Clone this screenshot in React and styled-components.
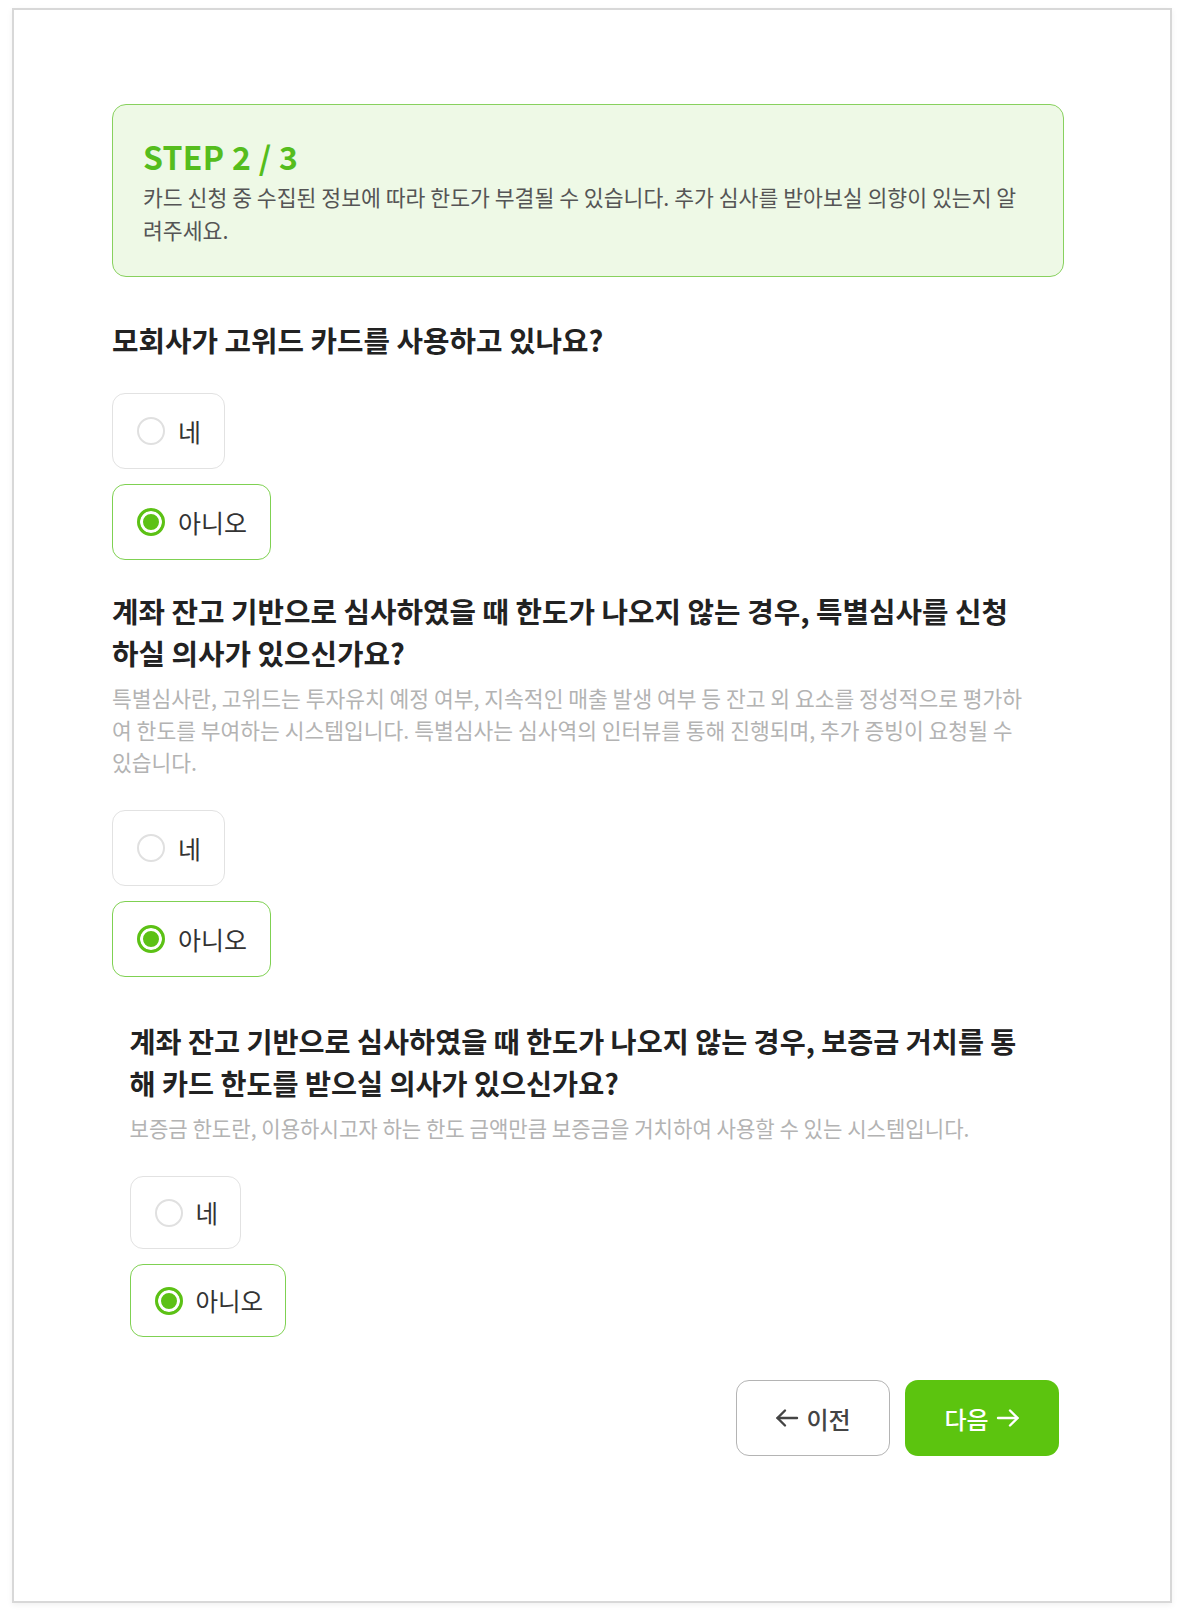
import styled, { createGlobalStyle, css } from 'styled-components';

const GlobalStyle = createGlobalStyle`
  body {
    margin: 0;
    background: #ffffff;
    font-family: "Noto Sans CJK KR", "Noto Sans", sans-serif;
    color: #222222;
  }
`;

const Frame = styled.div`
  margin: 8px 12px 16px;
  border: 2px solid #d8d8d8;
  box-shadow: 0 2px 6px rgba(0, 0, 0, 0.06);
  padding: 94px 0 145px 98px;
`;

const Content = styled.div`
  width: 952px;
  display: flex;
  flex-direction: column;
`;

const InfoBox = styled.div`
  background: #eef9e6;
  border: 1.5px solid #88d15e;
  border-radius: 14px;
  padding: 32px 38px 30px 30px;
`;

const StepTitle = styled.h2`
  margin: 0;
  font-size: 32px;
  line-height: 39px;
  font-weight: 700;
  color: #55bd1d;
  letter-spacing: 0.3px;
`;

const InfoText = styled.p`
  margin: 4px 0 0;
  font-size: 21.6px;
  line-height: 33px;
  color: #555555;
`;

const Question = styled.section`
  display: flex;
  flex-direction: column;
  margin-top: ${(p) => p.$top}px;
  padding-right: 34px;
  ${(p) =>
    p.$compact &&
    css`
      padding-left: 17.5px;
      padding-right: 40px;
    `}
`;

const Title = styled.h3`
  margin: 0;
  font-size: ${(p) => (p.$compact ? 28.3 : 28.8)}px;
  line-height: 42px;
  font-weight: 700;
  color: #222222;
`;

const Desc = styled.p`
  margin: 8px 0 0;
  font-size: ${(p) => (p.$compact ? 21.1 : 21.5)}px;
  line-height: 32px;
  color: #b3b3b3;
`;

const Options = styled.div`
  display: flex;
  flex-direction: column;
  align-items: flex-start;
  gap: 15px;
  margin-top: 32px;
`;

const Option = styled.label`
  display: flex;
  align-items: center;
  gap: 13px;
  box-sizing: border-box;
  height: ${(p) => (p.$compact ? 73 : 76)}px;
  padding: 0 ${(p) => (p.$compact ? 22 : 23)}px 0 24px;
  border-radius: 13px;
  border: ${(p) => (p.$checked ? '1.5px solid #7fd152' : '1px solid #e2e2e2')};
  background: #ffffff;
  font-size: ${(p) => (p.$compact ? 24.5 : 25)}px;
  color: #333333;
  cursor: pointer;
`;

const Radio = styled.span`
  box-sizing: border-box;
  width: 28px;
  height: 28px;
  border-radius: 50%;
  flex-shrink: 0;
  ${(p) =>
    p.$checked
      ? css`
          border: 3px solid #5cc115;
          background: #5cc115;
          box-shadow: inset 0 0 0 3px #ffffff;
        `
      : css`
          border: 2.5px solid #e0e0e0;
          background: #ffffff;
        `}
`;

const Actions = styled.div`
  display: flex;
  justify-content: flex-end;
  gap: 15px;
  margin-top: 43px;
  padding-right: 5px;
`;

const NavButton = styled.button`
  display: flex;
  align-items: center;
  justify-content: center;
  gap: 7px;
  width: 154px;
  height: 76px;
  border-radius: 13px;
  font-family: inherit;
  font-size: 24px;
  font-weight: 500;
  cursor: pointer;
  ${(p) =>
    p.$primary
      ? css`
          background: #5cc40f;
          border: none;
          color: #ffffff;
        `
      : css`
          background: #ffffff;
          border: 1px solid #b4b4b4;
          color: #444444;
        `}
`;

const Arrow = ({ dir }) => (
  <svg width="24" height="20" viewBox="0 0 24 20" fill="none" stroke="currentColor" strokeWidth="2.4" strokeLinecap="round" strokeLinejoin="round">
    {dir === 'left' ? (
      <>
        <path d="M22 10H2.5" />
        <path d="M10 2.5L2.5 10L10 17.5" />
      </>
    ) : (
      <>
        <path d="M2 10H21.5" />
        <path d="M14 2.5L21.5 10L14 17.5" />
      </>
    )}
  </svg>
);

const questions = [
  {
    title: '모회사가 고위드 카드를 사용하고 있나요?',
    top: 42,
  },
  {
    title: '계좌 잔고 기반으로 심사하였을 때 한도가 나오지 않는 경우, 특별심사를 신청하실 의사가 있으신가요?',
    desc: '특별심사란, 고위드는 투자유치 예정 여부, 지속적인 매출 발생 여부 등 잔고 외 요소를 정성적으로 평가하여 한도를 부여하는 시스템입니다. 특별심사는 심사역의 인터뷰를 통해 진행되며, 추가 증빙이 요청될 수 있습니다.',
    top: 30,
  },
  {
    title: '계좌 잔고 기반으로 심사하였을 때 한도가 나오지 않는 경우, 보증금 거치를 통해 카드 한도를 받으실 의사가 있으신가요?',
    desc: '보증금 한도란, 이용하시고자 하는 한도 금액만큼 보증금을 거치하여 사용할 수 있는 시스템입니다.',
    top: 43,
    compact: true,
  },
];

const App = () => {
  return (
    <>
      <GlobalStyle />
      <Frame>
        <Content>
          <InfoBox>
            <StepTitle>STEP 2 / 3</StepTitle>
            <InfoText>
              카드 신청 중 수집된 정보에 따라 한도가 부결될 수 있습니다. 추가 심사를 받아보실 의향이 있는지 알려주세요.
            </InfoText>
          </InfoBox>

          {questions.map((q, i) => (
            <Question key={i} $top={q.top} $compact={q.compact}>
              <Title $compact={q.compact}>{q.title}</Title>
              {q.desc && <Desc $compact={q.compact}>{q.desc}</Desc>}
              <Options>
                <Option $compact={q.compact}>
                  <Radio />
                  네
                </Option>
                <Option $compact={q.compact} $checked>
                  <Radio $checked />
                  아니오
                </Option>
              </Options>
            </Question>
          ))}

          <Actions>
            <NavButton>
              <Arrow dir="left" />
              이전
            </NavButton>
            <NavButton $primary>
              다음
              <Arrow dir="right" />
            </NavButton>
          </Actions>
        </Content>
      </Frame>
    </>
  );
};

export default App;
